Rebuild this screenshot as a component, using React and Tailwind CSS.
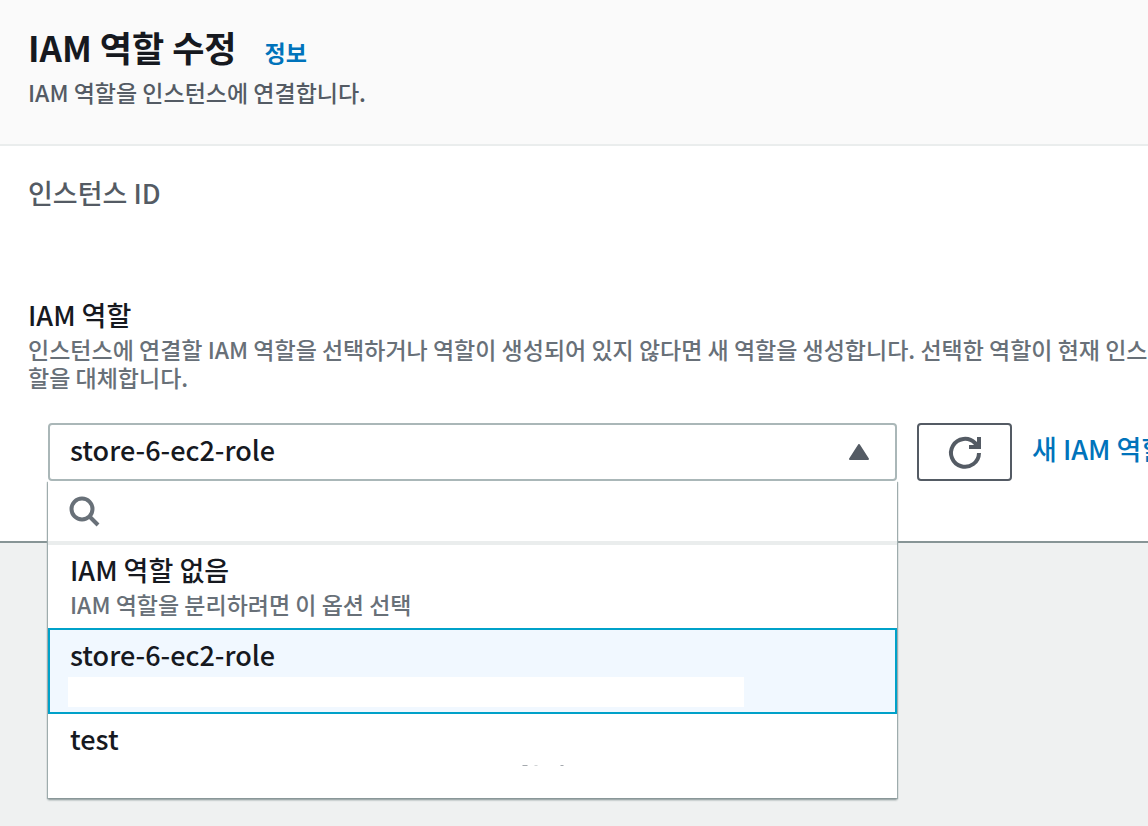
import { useState } from "react";

const roles = [
  { name: "IAM 역할 없음", description: "IAM 역할을 분리하려면 이 옵션 선택" },
  { name: "store-6-ec2-role", masked: true },
  { name: "test", specks: true },
];

export default function App() {
  const [open, setOpen] = useState(true);
  const [selected, setSelected] = useState("store-6-ec2-role");
  const [query, setQuery] = useState("");

  const visibleRoles = roles.filter((role) => role.name.includes(query));

  return (
    <div className="min-h-screen overflow-hidden bg-[#eff1f1] font-['Noto_Sans_CJK_KR',sans-serif] font-medium text-[#16191f]">
      <header className="border-b-2 border-[#eaeded] bg-[#fafafa] px-7 pt-[27px] pb-[38px]">
        <div className="flex items-baseline gap-7">
          <h1 className="text-[35px] leading-[40px] font-bold">IAM 역할 수정</h1>
          <a href="#info" className="text-[23px] leading-7 font-bold text-[#0073bb]">
            정보
          </a>
        </div>
        <p className="mt-[11px] text-[23px] leading-7 text-[#545b64]">IAM 역할을 인스턴스에 연결합니다.</p>
      </header>

      <main className="border-b-2 border-[#879596] bg-white pt-[31px] pb-[60px]">
        <h2 className="px-7 text-[27px] leading-8 text-[#545b64]">인스턴스 ID</h2>

        <div className="mt-[90px] pl-7">
          <label htmlFor="role" className="block text-[27px] leading-8">
            IAM 역할
          </label>
          <p className="mt-1 text-[23px] leading-7 whitespace-nowrap text-[#687078]">
            인스턴스에 연결할 IAM 역할을 선택하거나 역할이 생성되어 있지 않다면 새 역할을 생성합니다. 선택한 역할이 현재 인스턴
            <br />
            할을 대체합니다.
          </p>
        </div>

        <div className="mt-8 flex gap-5 pl-12">
          <div className="relative min-w-0 flex-1">
            <button
              id="role"
              type="button"
              aria-haspopup="listbox"
              aria-expanded={open}
              onClick={() => setOpen(!open)}
              className="flex h-[58px] w-full items-center justify-between rounded-sm border-2 border-[#aab7b8] bg-white pr-[26px] pl-5 text-[27px] leading-8"
            >
              <span className="pb-1">{selected}</span>
              <svg className="h-4 w-5" viewBox="0 0 20 16" fill="#545b64" stroke="#545b64" strokeWidth="2" strokeLinejoin="round">
                <path d="M10 1 19 15H1Z" />
              </svg>
            </button>

            {open && (
              <div className="absolute inset-x-0 top-full z-10 bg-white shadow-[0_2px_2px_0_#879596,1px_1px_1px_0_#aab7b8,-1px_1px_1px_0_#aab7b8]">
                <div className="flex h-16 items-center gap-4 border-b-4 border-[#eaeded] px-[21px]">
                  <svg className="size-8 shrink-0" viewBox="0 0 32 32" fill="none" stroke="#687078" strokeWidth="4">
                    <circle cx="13" cy="14" r="10.5" />
                    <path d="m20 21 9 9" />
                  </svg>
                  <input
                    type="text"
                    aria-label="IAM 역할 검색"
                    value={query}
                    onChange={(e) => setQuery(e.target.value)}
                    className="min-w-0 flex-1 text-[27px] outline-none"
                  />
                </div>
                <ul role="listbox" aria-label="IAM 역할">
                  {visibleRoles.map((role) => (
                    <li
                      key={role.name}
                      role="option"
                      aria-selected={role.name === selected}
                      onClick={() => setSelected(role.name)}
                      className={
                        role.name === selected
                          ? "h-[86px] cursor-pointer border-2 border-[#00a1c9] bg-[#f1f8ff] px-5 pt-[7px]"
                          : "h-[84px] cursor-pointer px-[22px] pt-[7px] first:h-[83px]"
                      }
                    >
                      <div className="text-[27px] leading-9">{role.name}</div>
                      {role.description && (
                        <div className="text-[23px] leading-8 text-[#687078]">{role.description}</div>
                      )}
                      {role.masked && <div className="mt-1 -ml-0.5 h-[30px] w-[676px] bg-white"></div>}
                      {role.specks && (
                        <svg className="mx-auto mt-1 h-3 w-full" viewBox="0 0 804 12" fill="#687078">
                          <path d="M452 4h5v1h-5zM490 4h3v1h-3z" opacity="0.6" />
                          <path d="M464 4h3v1h-3z" opacity="0.3" />
                        </svg>
                      )}
                    </li>
                  ))}
                </ul>
              </div>
            )}
          </div>

          <button
            type="button"
            aria-label="새로 고침"
            className="flex h-[58px] w-[95px] shrink-0 items-center justify-center rounded-sm border-2 border-[#545b64] bg-white"
          >
            <svg className="size-8 overflow-visible" viewBox="0 0 32 32" fill="none" stroke="#545b64" strokeWidth="4">
              <path d="M30 17A14 14 0 1 1 26 7L30 11M30 1V11H20" />
            </svg>
          </button>

          <a href="#new-role" className="w-[116px] shrink-0 pt-[10px] text-[27px] leading-8 whitespace-nowrap text-[#0073bb]">
            새 IAM 역할
          </a>
        </div>
      </main>
    </div>
  );
}
